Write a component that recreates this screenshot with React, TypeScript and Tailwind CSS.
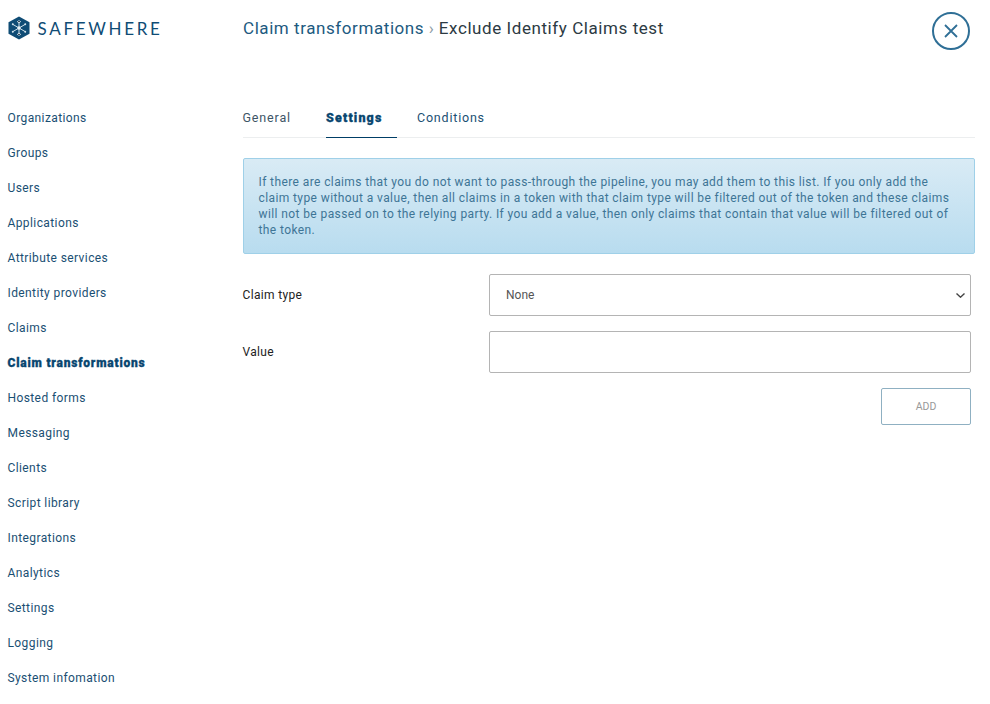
const navItems = [
  "Organizations",
  "Groups",
  "Users",
  "Applications",
  "Attribute services",
  "Identity providers",
  "Claims",
  "Claim transformations",
  "Hosted forms",
  "Messaging",
  "Clients",
  "Script library",
  "Integrations",
  "Analytics",
  "Settings",
  "Logging",
  "System infomation",
];

function Logo() {
  return (
    <div className="flex items-center gap-[8px] h-[24px]">
      <svg width="22" height="24" viewBox="0 0 22 24">
        <path d="M11 0.5 L21.5 6.2 V17.8 L11 23.5 L0.5 17.8 V6.2 Z" fill="#0f4c75" />
        <g stroke="#cfe0ea" strokeWidth="1" strokeLinecap="round">
          <path d="M11 4.5 V19.5" />
          <path d="M4.5 8.2 L17.5 15.8" />
          <path d="M17.5 8.2 L4.5 15.8" />
          <path d="M9.3 5.5 L11 7 L12.7 5.5" />
          <path d="M9.3 18.5 L11 17 L12.7 18.5" />
        </g>
        <circle cx="4.8" cy="8.3" r="1" fill="#cfe0ea" />
        <circle cx="17.2" cy="8.3" r="1" fill="#cfe0ea" />
        <circle cx="4.8" cy="15.7" r="1" fill="#cfe0ea" />
        <circle cx="17.2" cy="15.7" r="1" fill="#cfe0ea" />
        <circle cx="11" cy="12" r="1.7" fill="#e8f1f6" />
      </svg>
      <span className="text-[17px] leading-none tracking-[2.7px] text-[#0f4c75] font-['Lato',sans-serif]">
        SAFEWHERE
      </span>
    </div>
  );
}

export default function App() {
  return (
    <div className="flex w-[990px] h-[704px] bg-white overflow-hidden font-['Roboto',sans-serif]">
      <aside className="w-[242.5px] shrink-0 flex flex-col pl-[7.5px] pt-[16px]">
        <Logo />
        <nav className="flex flex-col mt-[60px]">
          {navItems.map((item) => (
            <a
              key={item}
              className={
                item === "Claim transformations"
                  ? "h-[35px] flex items-center text-[12px] tracking-[0.79px] font-black [-webkit-text-stroke:0.3px_#08466f] text-[#08466f]"
                  : "h-[35px] flex items-center text-[12px] tracking-[0.4px] text-[#1a4f73]"
              }
            >
              {item}
            </a>
          ))}
        </nav>
      </aside>
      <main className="flex-1 flex flex-col">
        <div className="flex justify-between pt-[12px] pl-[0.5px] pr-[20.5px] h-[100px]">
          <h1 className="text-[17px] leading-[32px] tracking-[0.57px]">
            <span className="text-[#1d5a80]">Claim transformations</span>
            <span className="text-[#8a9aa5] mx-[4.5px]">›</span>
            <span className="text-[#2c3a43]">Exclude Identify Claims test</span>
          </h1>
          <button className="w-[38px] h-[38px] rounded-full border-2 border-[#2f6f96] flex items-center justify-center">
            <svg width="14" height="14" viewBox="0 0 14 14" stroke="#2f6f96" strokeWidth="1.8" fill="none">
              <path d="M1 1 L13 13 M13 1 L1 13" />
            </svg>
          </button>
        </div>
        <div className="flex border-b border-[#eceeef] h-[38px] mr-[15px]">
          <div className="h-[37px] flex items-center text-[12.5px] tracking-[0.85px] text-[#3d5566] w-[83.5px]">General</div>
          <div className="h-[38px] w-[71px] flex items-center text-[12.5px] tracking-[1.15px] font-black [-webkit-text-stroke:0.3px_#08466f] text-[#08466f] border-b border-[#003e66]">Settings</div>
          <div className="h-[37px] flex items-center text-[12.5px] tracking-[0.8px] text-[#1a4f73] ml-[20px]">Conditions</div>
        </div>
        <div className="mt-[20px] mr-[15px] h-[96px] border border-[#9fd0e8] rounded-[2px] bg-gradient-to-b from-[#d9ebf5] to-[#b8dcef] px-[15px] pt-[15px] text-[12px] leading-[16px] tracking-[0.4px] text-[#3e7596]">
          If there are claims that you do not want to pass-through the pipeline, you may add them to this list. If you only add the claim type without a value, then all claims in a token with that claim type will be filtered out of the token and these claims will not be passed on to the relying party. If you add a value, then only claims that contain that value will be filtered out of the token.
        </div>
        <div className="flex items-center mt-[20px] mr-[19px]">
          <label className="w-[246.5px] text-[12px] tracking-[0.33px] text-[#222]">Claim type</label>
          <div className="flex-1 h-[42px] border border-[#b4b4b4] rounded-[2px] flex items-center justify-between pl-[16px] pr-[5px] text-[12px] text-[#555]">
            <span>None</span>
            <svg width="9" height="5" viewBox="0 0 9 5" fill="none" stroke="#444" strokeWidth="1.4">
              <path d="M0.5 0.5 L4.5 4.2 L8.5 0.5" />
            </svg>
          </div>
        </div>
        <div className="flex items-center mt-[15px] mr-[19px]">
          <label className="w-[246.5px] text-[12px] tracking-[0.33px] text-[#222]">Value</label>
          <div className="flex-1 h-[42px] border border-[#b4b4b4] rounded-[2px]" />
        </div>
        <div className="flex justify-end mt-[15px] mr-[19px]">
          <button className="w-[90px] h-[37px] border border-[#8fb0c2] rounded-[2px] text-[10.5px] text-[#999]">ADD</button>
        </div>
      </main>
    </div>
  );
}
